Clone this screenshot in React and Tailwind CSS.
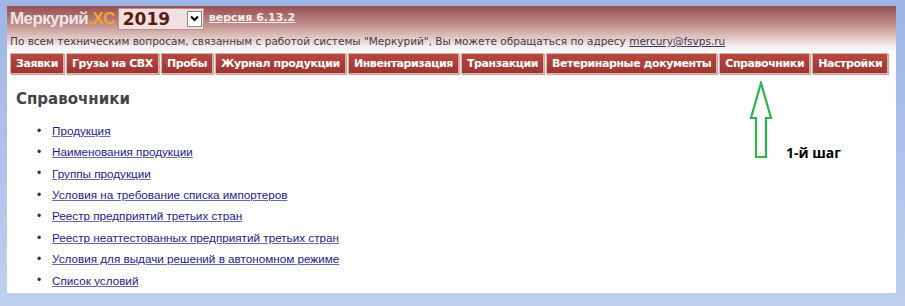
import React from 'react';

const menu = [
  'Заявки',
  'Грузы на СВХ',
  'Пробы',
  'Журнал продукции',
  'Инвентаризация',
  'Транзакции',
  'Ветеринарные документы',
  'Справочники',
  'Настройки',
];

const links = [
  'Продукция',
  'Наименования продукции',
  'Группы продукции',
  'Условия на требование списка импортеров',
  'Реестр предприятий третьих стран',
  'Реестр неаттестованных предприятий третьих стран',
  'Условия для выдачи решений в автономном режиме',
  'Список условий',
];

// green outline arrow pointing at the menu item
const StepArrow = () => (
  <svg width="26" height="78" viewBox="0 0 26 78" className="block shrink-0">
    <path
      d="M13 2 L23 37 L18 37 L18 76 L8 76 L8 37 L3 37 Z"
      fill="none"
      stroke="#2fb34a"
      strokeWidth="2.2"
      strokeLinejoin="miter"
    />
  </svg>
);

export default function App() {
  return (
    <div className="h-[306px] w-[905px] overflow-hidden bg-gradient-to-b from-[#9db6e6] to-[#bfd0ef] pt-[6px] pl-[7px]">
      <div className="h-[287px] w-[889px] bg-white">
        {/* header */}
        <div className="h-[47px] bg-[linear-gradient(to_bottom,#94504e_0%,#b47c7a_30%,#dcbcba_62%,#f6ecec_85%,#ffffff_100%)] px-[3px] pt-[1px] font-['DejaVu_Sans',sans-serif]">
          <div className="flex items-center h-[23px]">
            <span className="font-['Liberation_Sans',sans-serif] text-[17px] font-bold leading-none tracking-[-0.6px] text-[#efe6e6]">
              Меркурий<span className="text-[#f5a530]">.XC</span>
            </span>
            <div className="ml-[3px] flex h-[22px] w-[86px] items-stretch justify-between border border-[#b89090] bg-[#f1e0de]">
              <span className="px-[4px] text-[17px] font-bold leading-[20px] text-[#5c1812]">2019</span>
              <span className="my-[2px] mr-[1px] flex w-[15px] items-center justify-center border border-[#888] bg-white">
                <svg width="9" height="7" viewBox="0 0 9 7">
                  <path d="M1 1.5 L4.5 5 L8 1.5" fill="none" stroke="#000" strokeWidth="2" />
                </svg>
              </span>
            </div>
            <a className="ml-[5px] text-[11px] font-bold text-[#f8ecec] underline">версия 6.13.2</a>
          </div>
          <div className="mt-[4px] whitespace-nowrap text-[10.5px] leading-[14px] text-[#3e3e3e]">
            По всем техническим вопросам, связанным с работой системы "Меркурий", Вы можете обращаться по адресу{' '}
            <a className="text-[#3a3a5a] underline">mercury@fsvps.ru</a>
          </div>
        </div>

        {/* menu */}
        <div className="flex gap-[2px] pl-[3px] font-['DejaVu_Sans',sans-serif]">
          {menu.map((m) => (
            <div
              key={m}
              className="h-[21px] shrink-0 whitespace-nowrap border border-[#d9b0ac] bg-gradient-to-b from-[#b9483f] to-[#9c362f] px-[5px] text-[11px] font-bold leading-[19px] tracking-[-0.42px] text-white shadow-[1px_1px_1px_#c9a8a6]"
            >
              {m}
            </div>
          ))}
        </div>

        {/* content */}
        <div className="flex">
          <div className="w-[715px] pl-[9px] pt-[16px]">
            <h2 className="font-['DejaVu_Sans',sans-serif] text-[15px] font-bold leading-[18px] text-[#444]">
              Справочники
            </h2>
            <ul className="mt-[12px] font-['Liberation_Sans',sans-serif] text-[11.7px]">
              {links.map((l) => (
                <li key={l} className="flex h-[21.4px] items-center">
                  <span className="w-[36px] pl-[21px] text-[12px] text-[#333]">•</span>
                  <a className="text-[#1c1c8c] underline decoration-[#6a6aa8]">{l}</a>
                </li>
              ))}
            </ul>
          </div>
          <div className="flex items-start pt-[7px]">
            <div className="ml-[26px]">
              <StepArrow />
            </div>
            <span className="ml-[12px] mt-[62px] font-['Open_Sans',sans-serif] text-[14px] font-bold leading-[19px] text-black">
              1-й шаг
            </span>
          </div>
        </div>
      </div>
    </div>
  );
}
